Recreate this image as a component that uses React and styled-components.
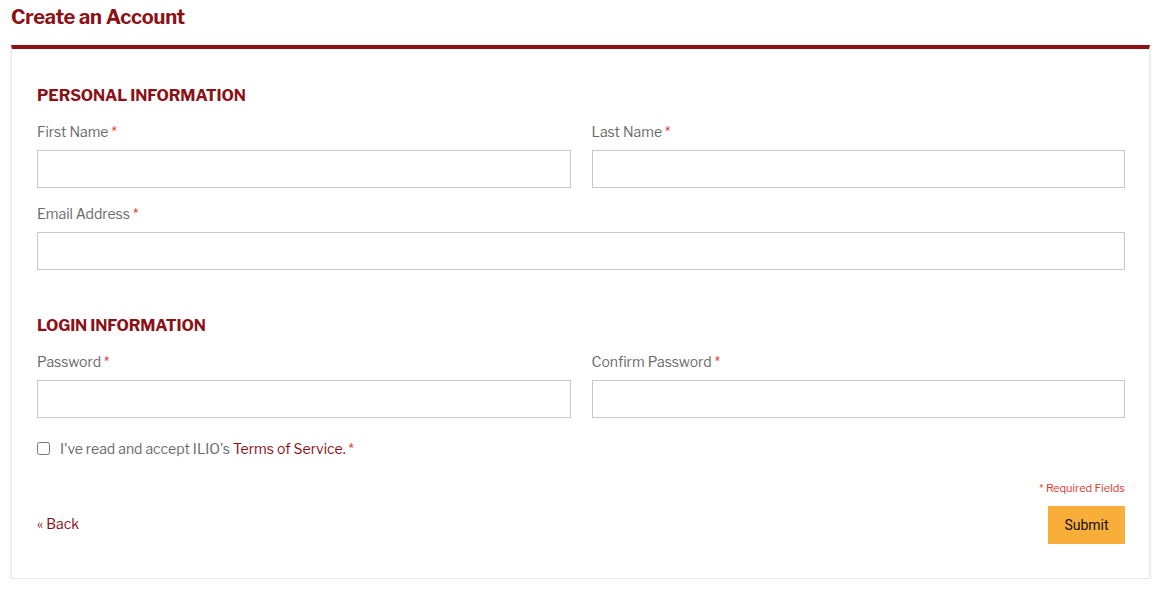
import styled, { createGlobalStyle } from "styled-components";

const GlobalStyle = createGlobalStyle`
  body {
    margin: 0;
    background: #ffffff;
    font-family: "Libre Franklin", "Lato", "Liberation Sans", sans-serif;
  }
`;

const Page = styled.div`
  padding: 0 9px 0 11px;
`;

const Title = styled.h1`
  margin: 0 0 16px;
  padding-top: 5px;
  font-size: 20px;
  line-height: 24px;
  font-weight: 700;
  color: #8c1117;
  letter-spacing: -0.2px;
`;

const Card = styled.div`
  border: 1px solid #e8e8e8;
  border-top: 4px solid #8c1117;
  background: #fff;
  box-shadow: 0 1px 4px rgba(0, 0, 0, 0.1);
  padding: 37px 24px 34px 25px;
`;

const Section = styled.div`
  & + & {
    margin-top: 46px;
  }
`;

const SectionTitle = styled.h2`
  margin: 0 0 17px;
  font-size: 16px;
  line-height: 20px;
  font-weight: 700;
  color: #8c1117;
  letter-spacing: -0.1px;
`;

const Row = styled.div`
  display: grid;
  grid-template-columns: ${(p) => (p.$cols === 2 ? "1fr 1fr" : "1fr")};
  column-gap: 21px;
  & + & {
    margin-top: 17px;
  }
`;

const Field = styled.div`
  display: flex;
  flex-direction: column;
`;

const Label = styled.label`
  font-size: 14px;
  line-height: 18px;
  color: #6b6b6b;
  margin-bottom: 9px;
`;

const Star = styled.span`
  color: #e0382c;
  margin-left: 3px;
`;

const Input = styled.input`
  box-sizing: border-box;
  height: 38px;
  width: 100%;
  border: 1px solid #c8c8c8;
  padding: 0 10px;
  font-size: 14px;
  font-family: inherit;
  color: #333;
  caret-color: #333;
  outline: none;
`;

const CheckRow = styled.label`
  display: flex;
  align-items: center;
  gap: 10px;
  margin-top: 20px;
  height: 20px;
  font-size: 14px;
  color: #6b6b6b;
`;

const Check = styled.input`
  margin: 0;
  width: 13px;
  height: 13px;
`;

const Terms = styled.a`
  color: #8c1117;
  text-decoration: none;
`;

const Required = styled.div`
  margin-top: 23px;
  text-align: right;
  font-size: 11px;
  line-height: 14px;
  color: #e0382c;
`;

const Actions = styled.div`
  display: flex;
  justify-content: space-between;
  align-items: center;
  margin-top: 11px;
`;

const Back = styled.a`
  font-size: 14px;
  line-height: 18px;
  margin-top: -3px;
  color: #8c1117;
  text-decoration: none;
`;

const Submit = styled.button`
  height: 38px;
  width: 77px;
  border: none;
  background: #f9ae3a;
  color: #111;
  font-size: 14px;
  font-family: "Roboto", sans-serif;
  cursor: pointer;
`;

const TextField = ({ label, type = "text", autoFocus }) => (
  <Field>
    <Label>
      {label}
      <Star>*</Star>
    </Label>
    <Input type={type} autoFocus={autoFocus} />
  </Field>
);

export default function App() {
  return (
    <Page>
      <GlobalStyle />
      <Title>Create an Account</Title>
      <Card>
        <Section>
          <SectionTitle>PERSONAL INFORMATION</SectionTitle>
          <Row $cols={2}>
            <TextField label="First Name" autoFocus />
            <TextField label="Last Name" />
          </Row>
          <Row>
            <TextField label="Email Address" type="email" />
          </Row>
        </Section>
        <Section>
          <SectionTitle>LOGIN INFORMATION</SectionTitle>
          <Row $cols={2}>
            <TextField label="Password" type="password" />
            <TextField label="Confirm Password" type="password" />
          </Row>
        </Section>
        <CheckRow>
          <Check type="checkbox" />
          <span>
            I've read and accept ILIO's <Terms href="#">Terms of Service.</Terms>
            <Star>*</Star>
          </span>
        </CheckRow>
        <Required>* Required Fields</Required>
        <Actions>
          <Back href="#">« Back</Back>
          <Submit type="button">Submit</Submit>
        </Actions>
      </Card>
    </Page>
  );
}
